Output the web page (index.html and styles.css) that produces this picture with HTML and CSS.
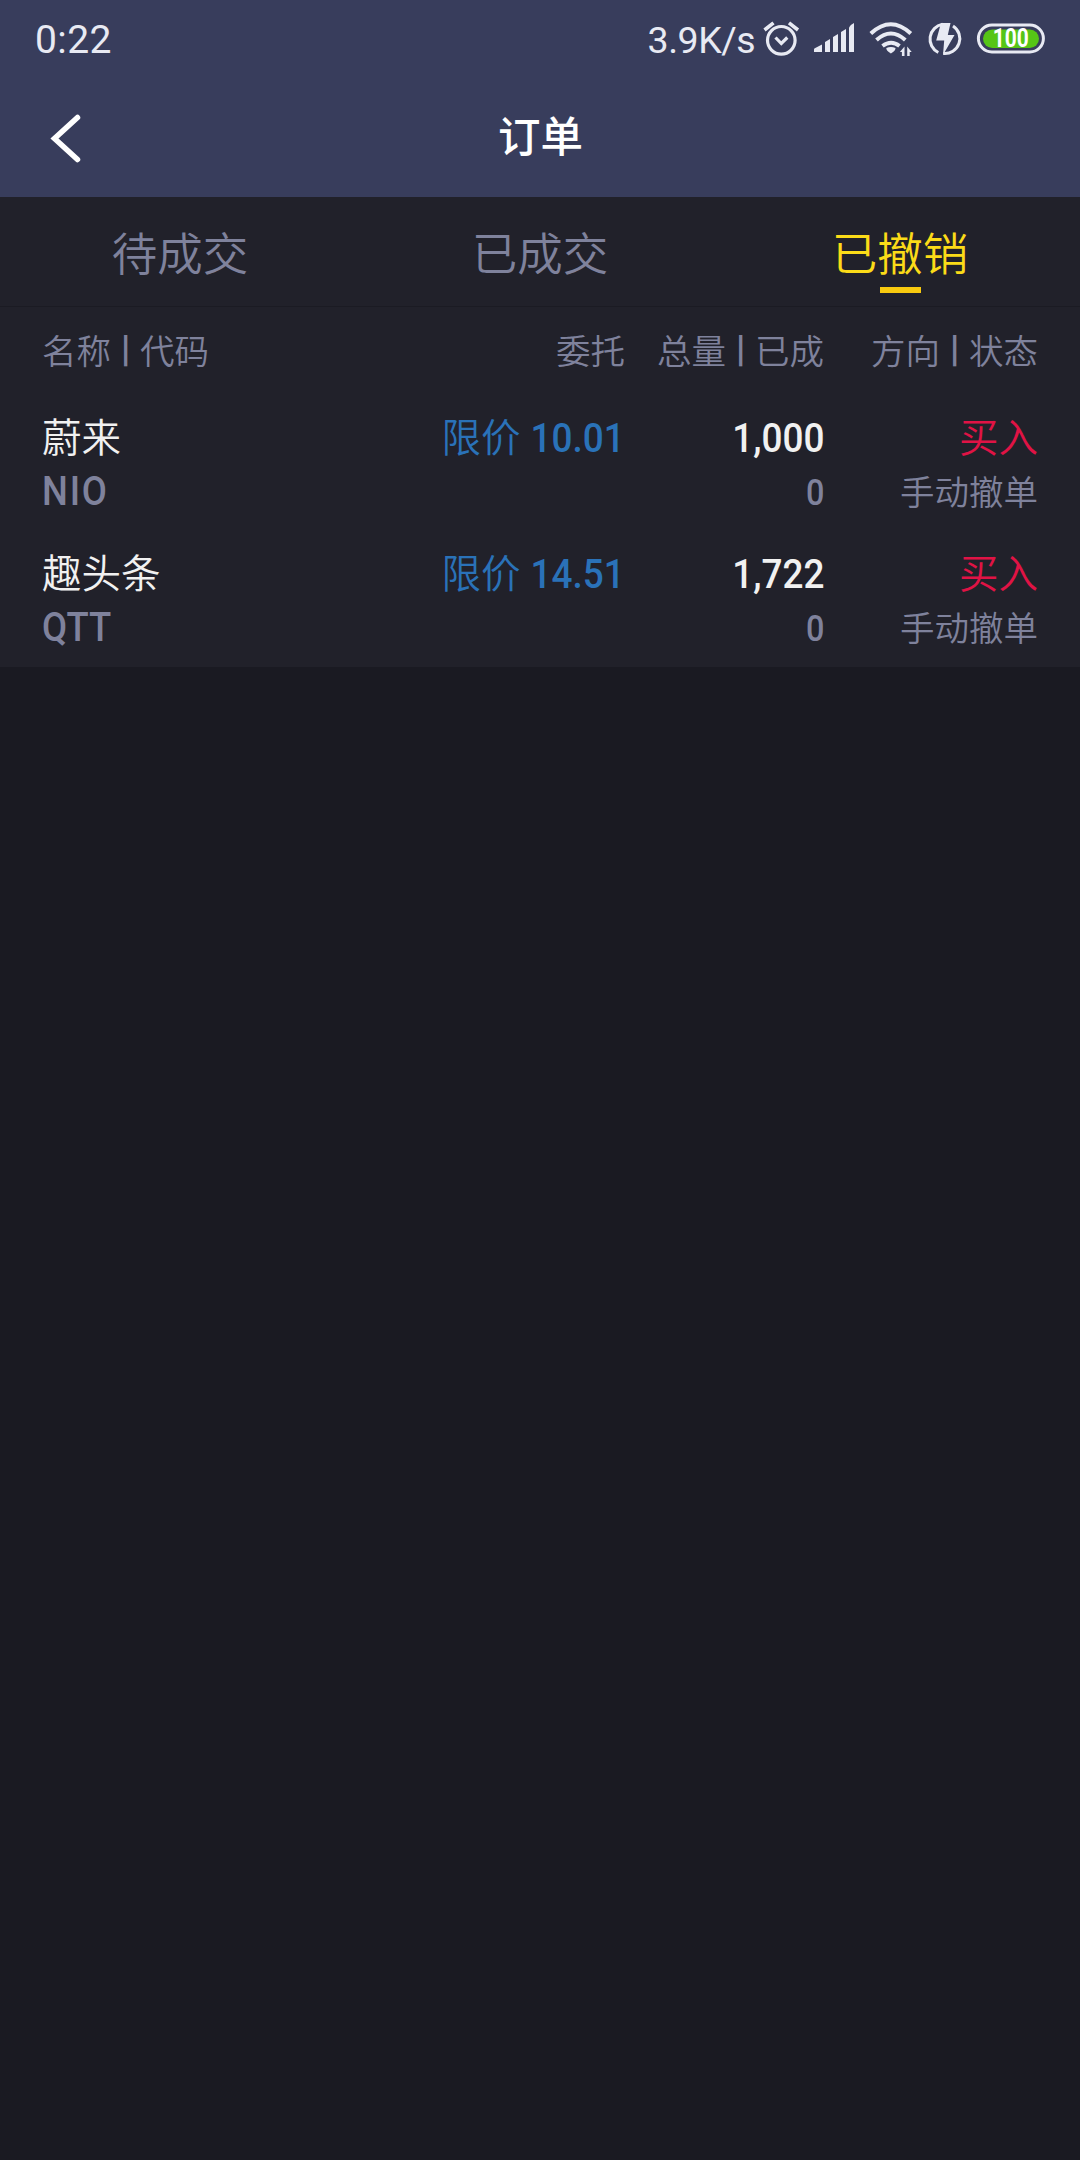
FILE: index.html
```html
<!DOCTYPE html>
<html lang="zh-CN">
<head>
<meta charset="utf-8">
<title>订单</title>
<link rel="stylesheet" href="styles.css">
</head>
<body>
<header class="top">
  <div class="status">
    <span class="time">0:22</span>
    <span class="speed">3.9K/s</span>
    <svg class="status-icons" width="290" height="44" viewBox="0 0 290 44" fill="none">
      <g stroke="#e8eaf3" stroke-width="3.2">
        <circle cx="21.3" cy="24.3" r="13.8"/>
        <path d="M4.5 14 13.5 6.8M29 6.8 38 14" stroke-width="3.6"/>
        <path d="M15.5 21.5l5.8 6 6-6"/>
      </g>
      <g fill="#e8eaf3">
        <path d="M54 36v-2.500q0-.8.8-1.300L62 28.500V36zM65 36V26l5-3V36zM73 36V21l5-3V36zM81 36V16l5-3V36z"/>
        <path d="M89 36V11.500q1.300-2.800 5-4.500V36z"/>
        <path d="M126.300 32q4.700-2.200 9.200 0 .3 2.500-4.600 5.500-4.900-3-4.600-5.500z"/>
        <path d="M144.500 30.500V40h-2.600v-4h-2zM147.200 40v-9.500l4.500 5.500h-2v4z"/>
      </g>
      <g stroke="#e8eaf3" stroke-width="4">
        <path d="M110.800 17.500q20-18.500 40 0"/>
        <path d="M116.500 24q14.400-13 28.800 0"/>
        <path d="M122.500 30q8.700-6.500 17 0"/>
      </g>
      <g stroke="#e8eaf3" stroke-width="3">
        <path d="M193 10a15 15 0 0 1-9.700 27.500M178.300 36.500A15 15 0 0 1 182.500 8.300"/>
      </g>
      <path d="M181 7h9.500l-2.700 12h6.700L183 39l1.200-14.500h-8z" fill="#e8eaf3"/>
      <rect x="218.400" y="9" width="65" height="27" rx="13.500" stroke="#e8eaf3" stroke-width="3"/>
      <rect x="223" y="13.500" width="56" height="18.500" rx="9.250" fill="#56c516"/>
      <text class="battery" x="250.700" y="31" text-anchor="middle" textLength="36" lengthAdjust="spacingAndGlyphs">100</text>
    </svg>
  </div>
  <div class="titlebar">
    <svg class="back" width="36" height="56" viewBox="0 0 36 56"><path d="M29.500 7.500 6.500 28.500l23 21" fill="none" stroke="#fff" stroke-width="5.500" stroke-linecap="round"/></svg>
    <h1 class="title">订单</h1>
  </div>
</header>
<nav class="tabs">
  <span class="tab">待成交</span>
  <span class="tab">已成交</span>
  <span class="tab active">已撤销</span>
</nav>
<main class="orders">
  <div class="grid heads">
    <span>名称<i class="sep">|</i>代码</span>
    <span>委托</span>
    <span>总量<i class="sep">|</i>已成</span>
    <span>方向<i class="sep">|</i>状态</span>
  </div>
  <div class="grid order">
    <div class="cell"><span class="name">蔚来</span><span class="code wide">NIO</span></div>
    <div class="cell price"><span>限价<b class="num">10.01</b></span></div>
    <div class="cell"><b class="num total">1,000</b><b class="num done">0</b></div>
    <div class="cell"><span class="side">买入</span><span class="state">手动撤单</span></div>
  </div>
  <div class="grid order">
    <div class="cell"><span class="name">趣头条</span><span class="code">QTT</span></div>
    <div class="cell price"><span>限价<b class="num">14.51</b></span></div>
    <div class="cell"><b class="num total">1,722</b><b class="num done">0</b></div>
    <div class="cell"><span class="side">买入</span><span class="state">手动撤单</span></div>
  </div>
</main>
</body>
</html>
```
FILE: styles.css
```css
* { box-sizing: border-box; }
body {
  margin: 0;
  width: 1080px;
  min-height: 2160px;
  background: #1a1a22;
  color: #7f829c;
  font-family: Roboto, "Noto Sans CJK SC", sans-serif;
  font-weight: 350;
}
.top { height: 197px; background: #383d5c; }
.status {
  display: flex;
  align-items: center;
  height: 80px;
  padding: 0 30px 0 35px;
  color: #e8eaf3;
  font-weight: 400;
}
.time { font-size: 39px; letter-spacing: .4px; margin-right: auto; }
.speed { font-size: 37.500px; letter-spacing: -.5px; margin-right: 1px; }
.status-icons { display: block; margin: -4px 0 0 4px; }
.battery { font: 700 25px Roboto, sans-serif; fill: #fff; }
.titlebar {
  display: grid;
  grid-template-columns: 120px 1fr 120px;
  align-items: center;
  height: 117px;
}
.back { margin: -1px 0 0 48px; }
.title {
  margin: -9px 0 0 1px;
  font: 500 42.500px/60px "Noto Sans CJK SC", sans-serif;
  color: #fff;
  text-align: center;
}
.tabs {
  display: grid;
  grid-template-columns: repeat(3, 1fr);
  height: 110px;
  background: #21212a;
  border-bottom: 1px solid #1b1b23;
}
.tab {
  display: flex;
  flex-direction: column;
  align-items: center;
  font-size: 45.500px;
  line-height: 60px;
  padding-top: 29px;
}
.active { color: #fbdb18; }
.active::after {
  content: "";
  width: 41px;
  height: 6px;
  margin-top: 1px;
  background: #f8ca0f;
}
.orders { height: 360px; background: #21212a; }
.grid {
  display: grid;
  grid-template-columns: 350px 233px 199px 214px;
  padding: 0 42px;
  text-align: right;
  white-space: nowrap;
}
.grid > :first-child { text-align: left; align-items: flex-start; }
.heads { height: 87px; font-size: 34.500px; line-height: 91px; }
.sep {
  display: inline-block;
  width: 29px;
  font: 900 36px/30px Roboto, sans-serif;
  text-align: center;
  vertical-align: 3px;
}
.order { height: 136px; }
.cell {
  display: flex;
  flex-direction: column;
  align-items: flex-end;
  padding-top: 18px;
  font-size: 39.500px;
  line-height: 53px;
}
.name { color: #f1f1f1; }
.code {
  font-size: 40.500px;
  font-weight: 500;
  transform: scaleX(.9);
  transform-origin: left;
}
.wide { letter-spacing: 2px; }
.num {
  display: inline-block;
  font-weight: 500;
  font-size: 41px;
  transform: scaleX(.9);
  transform-origin: right;
}
.price { color: #2a72b8; }
.total { color: #f1f1f1; }
.done { font-size: 36px; padding-top: 2px; }
.side { color: #e01345; }
.state { font-size: 34.500px; padding-top: 2px; }
```
